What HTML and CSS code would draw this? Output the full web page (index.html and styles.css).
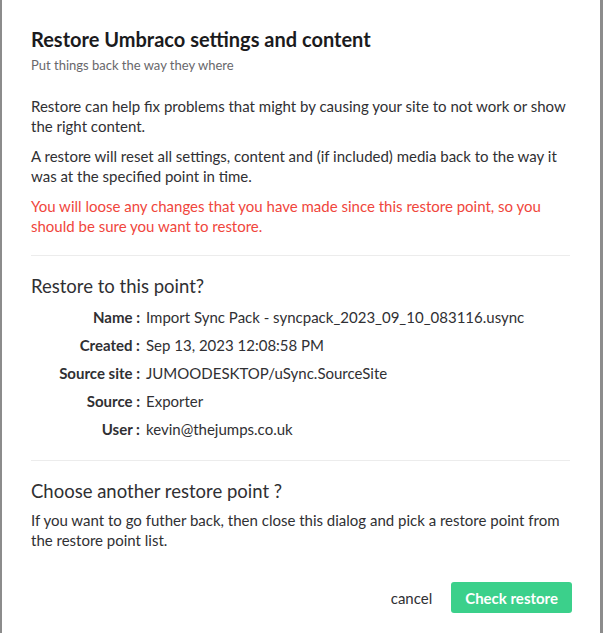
FILE: index.html
```html
<!DOCTYPE html>
<html lang="en">
<head>
<meta charset="utf-8">
<title>Restore Umbraco settings and content</title>
<link rel="stylesheet" href="styles.css">
</head>
<body>
<div class="dialog">
  <header class="head">
    <h1 class="title">Restore Umbraco settings and content</h1>
    <p class="sub">Put things back the way they where</p>
  </header>
  <section class="content">
    <p>Restore can help fix problems that might by causing your site to not work or show the right content.</p>
    <p>A restore will reset all settings, content and (if included) media back to the way it was at the specified point in time.</p>
    <p class="warn">You will loose any changes that you have made since this restore point, so you should be sure you want to restore.</p>
    <hr class="sep">
    <h2 class="section">Restore to this point?</h2>
    <div class="info">
      <div class="row"><span class="label">Name :</span><span class="value">Import Sync Pack - syncpack_2023_09_10_083116.usync</span></div>
      <div class="row"><span class="label">Created :</span><span class="value">Sep 13, 2023 12:08:58 PM</span></div>
      <div class="row"><span class="label">Source site :</span><span class="value">JUMOODESKTOP/uSync.SourceSite</span></div>
      <div class="row"><span class="label">Source :</span><span class="value">Exporter</span></div>
      <div class="row"><span class="label">User :</span><span class="value">kevin@thejumps.co.uk</span></div>
    </div>
    <hr class="sep">
    <h2 class="section">Choose another restore point ?</h2>
    <p class="closing">If you want to go futher back, then close this dialog and pick a restore point from the restore point list.</p>
  </section>
  <footer class="foot">
    <button class="btn-link" type="button">cancel</button>
    <button class="btn-primary" type="button">Check restore</button>
  </footer>
</div>
</body>
</html>
```

FILE: styles.css
```css
html, body {
  margin: 0;
  padding: 0;
  height: 100%;
}
body {
  background: #8c8c8c;
  font-family: Lato, "Open Sans", "Liberation Sans", sans-serif;
  color: #303033;
  font-size: 15px;
  line-height: 20px;
  overflow: hidden;
}
.dialog {
  margin-left: 2px;
  width: 598px;
  height: 633px;
  background: #fff;
  box-sizing: border-box;
  padding: 0 28px 0 29px;
  display: flex;
  flex-direction: column;
}
.head {
  padding-top: 27px;
}
.title {
  margin: 0;
  font-size: 20px;
  line-height: 24px;
  font-weight: 700;
  color: #1b1b1d;
}
.sub {
  margin: 6px 0 0;
  font-size: 13px;
  line-height: 16px;
  color: #68676b;
}
.content {
  padding-top: 23px;
  padding-right: 2px;
}
.content p {
  margin: 0 0 10px;
}
.content .warn {
  color: #f0463c;
  margin-bottom: 0;
}
.sep {
  border: 0;
  border-top: 1px solid #ececec;
  margin: 19px 0 18px;
  height: 0;
}
.section {
  margin: 0 0 5px;
  font-size: 18.5px;
  line-height: 24px;
  font-weight: 400;
  color: #303033;
}
.content .closing {
  margin-top: 7px;
}
.info {
  display: flex;
  flex-direction: column;
}
.row {
  display: grid;
  grid-template-columns: 109px 1fr;
  column-gap: 6px;
  padding: 4px 0;
}
.label {
  text-align: right;
  font-weight: 700;
  white-space: nowrap;
}
.info + .sep {
  margin-top: 17px;
}
.foot {
  margin-top: auto;
  margin-bottom: 20px;
  display: flex;
  justify-content: flex-end;
  align-items: center;
  gap: 9px;
}
.btn-link {
  background: none;
  border: 0;
  font: inherit;
  color: #303033;
  padding: 5px 10px;
  cursor: pointer;
}
.btn-primary {
  background: #3bd08b;
  border: 0;
  border-radius: 3px;
  color: #fff;
  font: inherit;
  font-weight: 700;
  height: 31px;
  padding: 0 14px;
  cursor: pointer;
}
```
